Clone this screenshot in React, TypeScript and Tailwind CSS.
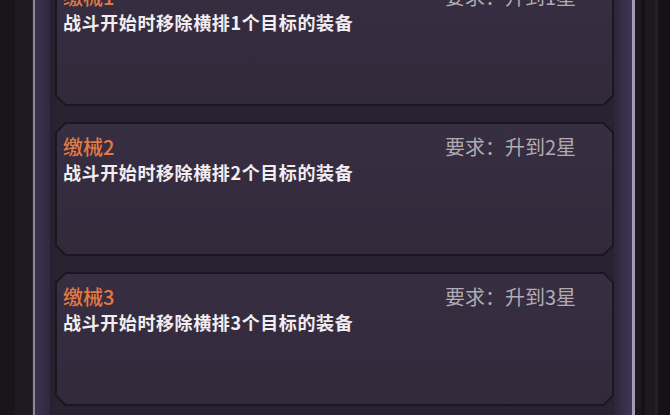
import React from "react";

const cards = [
  { n: 1 },
  { n: 2 },
  { n: 3 },
];

const outerClip =
  "[clip-path:polygon(10px_0,calc(100%-10px)_0,100%_10px,100%_calc(100%-10px),calc(100%-10px)_100%,10px_100%,0_calc(100%-10px),0_10px)]";
const innerClip =
  "[clip-path:polygon(9px_0,calc(100%-9px)_0,100%_9px,100%_calc(100%-9px),calc(100%-9px)_100%,9px_100%,0_calc(100%-9px),0_9px)]";

function Card({ n }: { n: number }) {
  return (
    <div className={`h-[134px] shrink-0 bg-[#1b1721] p-[2px] ${outerClip}`}>
      <div
        className={`h-full bg-gradient-to-b from-[#382e41] to-[#32293b] pl-[6px] pr-[36px] pt-[11px] ${innerClip}`}
      >
        <div className="flex justify-between items-center h-[24px]">
          <span className="text-[20px] leading-[24px] text-[#e07a45] font-medium">
            缴械{n}
          </span>
          <span className="text-[20px] leading-[24px] text-[#b0abb4]">
            要求：升到{n}星
          </span>
        </div>
        <div className="mt-[1px] text-[18px] leading-[24px] tracking-[0.6px] text-[#f1edf1] font-bold">
          战斗开始时移除横排{n}个目标的装备
        </div>
      </div>
    </div>
  );
}

export default function App() {
  return (
    <div
      className="w-[670px] h-[415px] overflow-hidden flex bg-[#171318]"
      style={{ fontFamily: '"Noto Sans CJK SC", "Noto Sans", sans-serif' }}
    >
      <div className="w-[15px] shrink-0 bg-[#19151a]" />
      <div className="w-[18px] shrink-0 bg-[#1f1a22] border-r border-[#2b252e]" />
      <div className="w-[2px] shrink-0 bg-[#8a849b]" />
      <div className="w-[15px] shrink-0 bg-gradient-to-r from-[#3a3450] to-[#2e2940]" />
      <div className="w-[5px] shrink-0 bg-[#262030]" />
      <div className="w-[559px] shrink-0 bg-[#282231] flex flex-col gap-[16px] mt-[-28px]">
        {cards.map((c) => (
          <Card key={c.n} n={c.n} />
        ))}
      </div>
      <div className="w-[18px] shrink-0 bg-gradient-to-r from-[#2c263b] to-[#3e3755]" />
      <div className="w-[3px] shrink-0 bg-[#a29cb3]" />
      <div className="flex-1 flex">
        <div className="w-[6px] bg-[#1c181e]" />
        <div className="w-[4px] bg-[#141115]" />
        <div className="w-[10px] bg-[#1d191f]" />
        <div className="w-[3px] bg-[#252027]" />
        <div className="flex-1 bg-[#151216]" />
      </div>
    </div>
  );
}
